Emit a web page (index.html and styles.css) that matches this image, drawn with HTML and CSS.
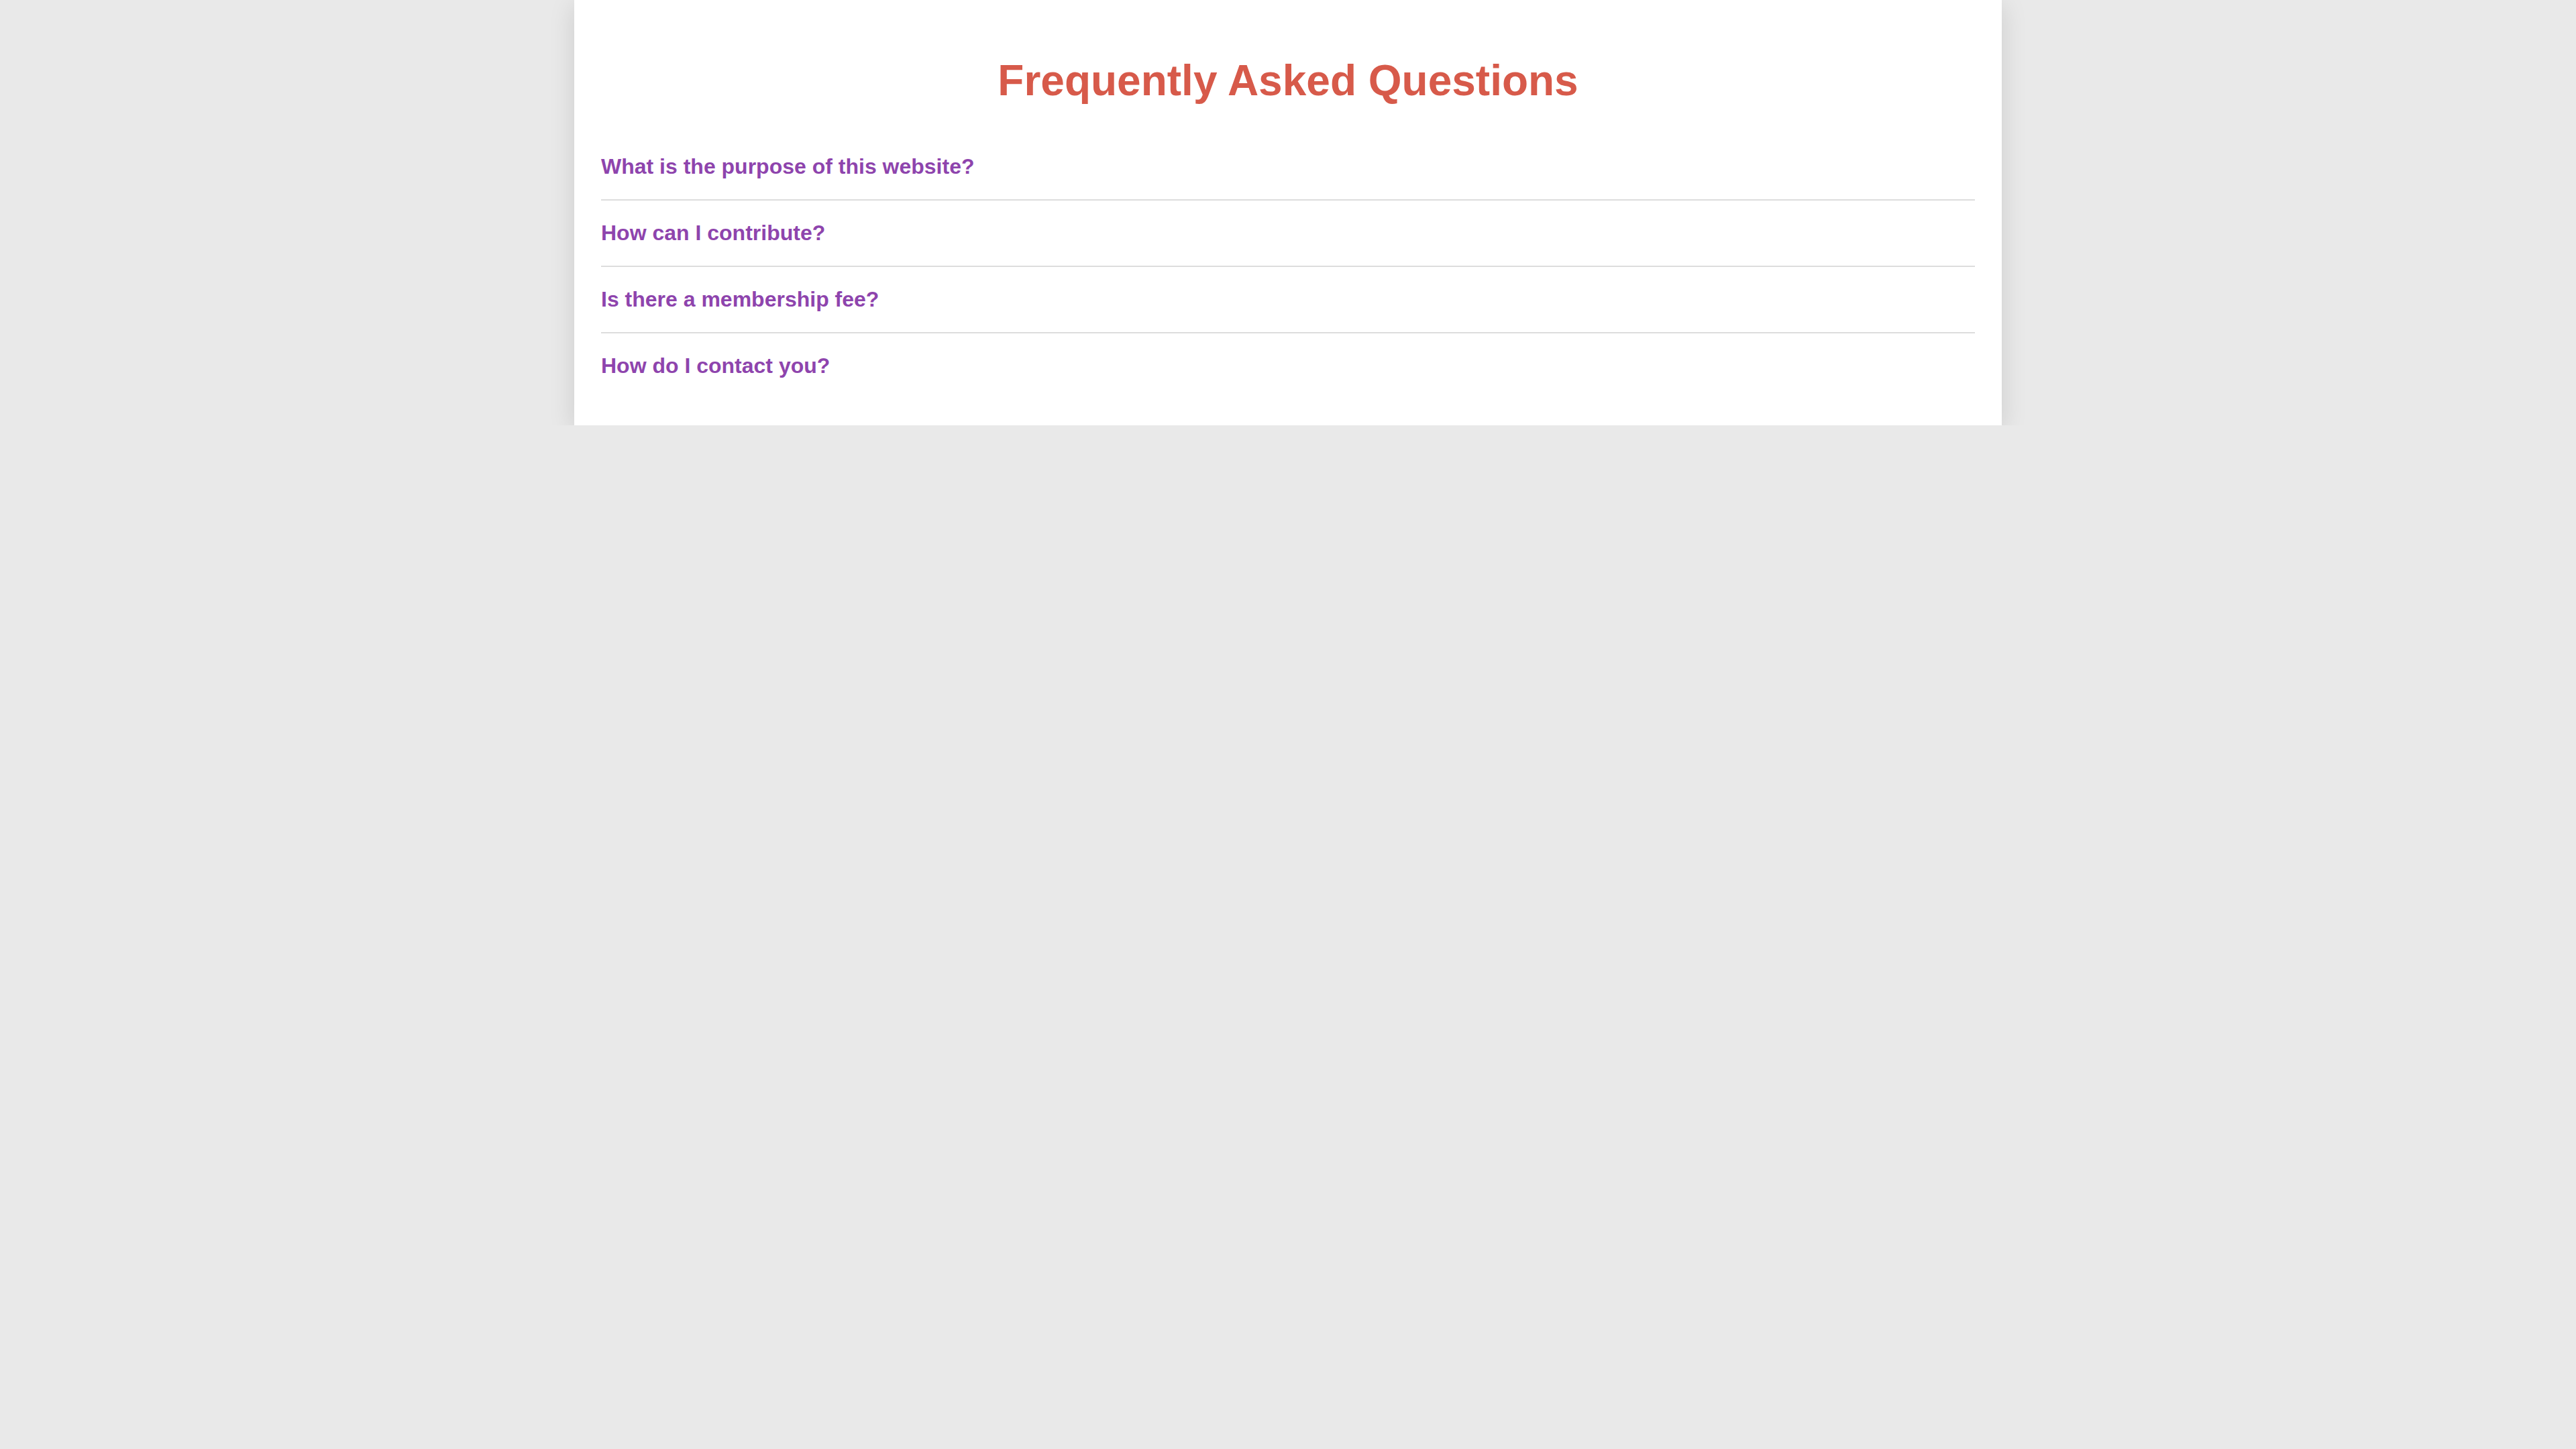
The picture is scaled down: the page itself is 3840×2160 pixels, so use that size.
FILE: index.html
```html
<!DOCTYPE html>
<html lang="en">
<head>
<meta charset="utf-8">
<title>FAQ</title>
<link rel="stylesheet" href="styles.css">
</head>
<body>
<main class="faq">
  <h1 class="faq-title">Frequently Asked Questions</h1>
  <ul class="faq-list">
    <li class="faq-item"><h2 class="faq-question">What is the purpose of this website?</h2></li>
    <li class="faq-item"><h2 class="faq-question">How can I contribute?</h2></li>
    <li class="faq-item"><h2 class="faq-question">Is there a membership fee?</h2></li>
    <li class="faq-item"><h2 class="faq-question">How do I contact you?</h2></li>
  </ul>
</main>
</body>
</html>
```

FILE: styles.css
```css
html, body {
  margin: 0;
  padding: 0;
}
body {
  background: #e9e9e9;
  font-family: "Liberation Sans", Arial, sans-serif;
}
.faq {
  width: 2048px;
  margin: 0 auto;
  padding: 40px;
  background: #ffffff;
  box-shadow: 0 8px 36px rgba(0, 0, 0, 0.13);
}
.faq-title {
  margin: 0.67em 0;
  font-size: 64px;
  font-weight: 700;
  text-align: center;
  color: #d75a4a;
}
.faq-list {
  list-style: none;
  margin: 0;
  padding: 0;
}
.faq-item {
  padding: 30px 0;
  border-bottom: 2px solid #dddddd;
}
.faq-item:last-child {
  border-bottom: none;
}
.faq-question {
  margin: 0;
  font-size: 32px;
  font-weight: 700;
  color: #8e44ad;
}
```
